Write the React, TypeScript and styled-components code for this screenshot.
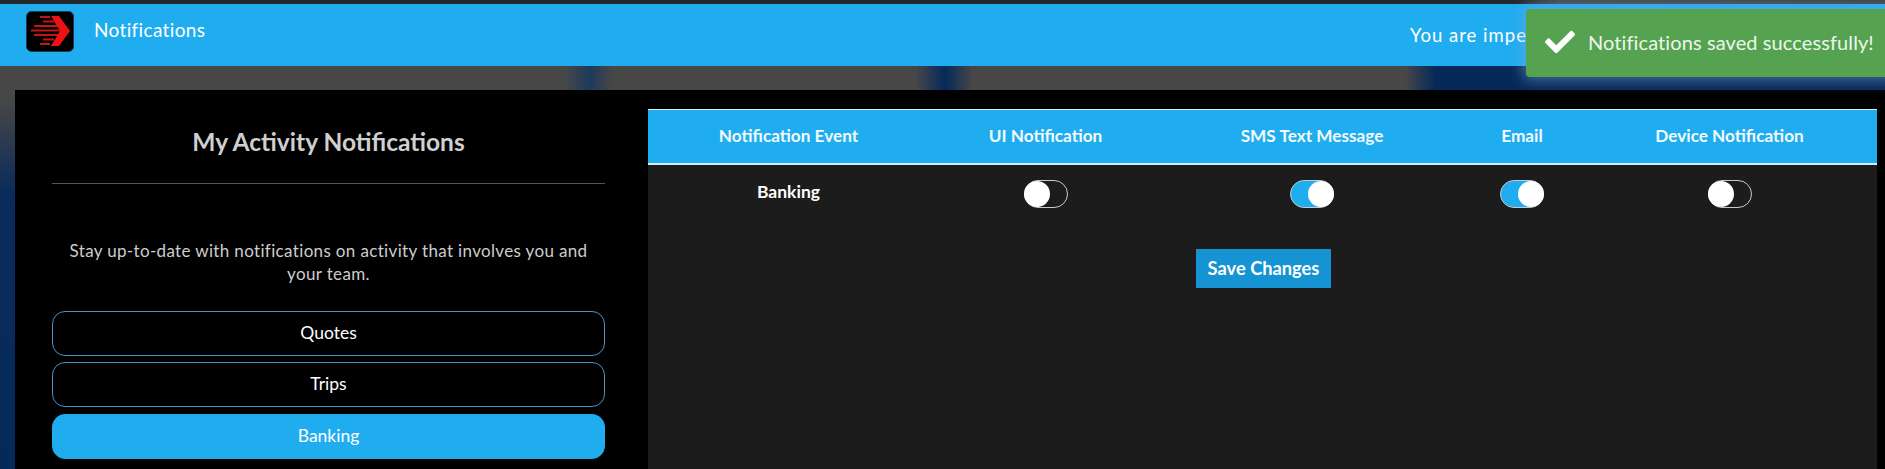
import React from "react";
import styled, { createGlobalStyle } from "styled-components";
import { FaCheck } from "react-icons/fa";

const Global = createGlobalStyle`
  html, body { margin: 0; padding: 0; background: #000; }
  * { box-sizing: border-box; }
  body { font-family: "Lato", "Noto Sans", "Liberation Sans", sans-serif; }
`;

const Page = styled.div`
  position: relative;
  width: 1885px;
  height: 469px;
  overflow: hidden;
  display: flex;
  flex-direction: column;
  background:
    linear-gradient(90deg, transparent 0, transparent 565px, #1d3a5c 590px, transparent 613px, transparent 915px, #062a5a 945px, transparent 973px, transparent 1405px, #06295a 1435px, #06295a 100%),
    linear-gradient(180deg, #474747 0, #474747 100px, #0b2c5a 190px, #052a58 100%);
`;

const TopStrip = styled.div`
  height: 4px;
  background: linear-gradient(90deg, #23292c 0, #23292c 1520px, #45484a 1560px, #3c3f40 100%);
`;

const Header = styled.header`
  height: 62px;
  background: #20adf0;
  display: flex;
  align-items: center;
  padding-left: 26px;
  color: #fff;
`;

const Logo = styled.svg`
  width: 48px;
  height: 41px;
  margin-top: -8px;
  flex: none;
`;

const PageTitle = styled.div`
  margin-left: 20px;
  margin-top: -11px;
  font-size: 19px;
  letter-spacing: 0.35px;
`;

const Impersonation = styled.div`
  margin-left: auto;
  width: 475px;
  margin-top: -1px;
  white-space: nowrap;
  font-size: 18.5px;
  letter-spacing: 1px;
`;

const Main = styled.main`
  flex: 1;
  min-height: 0;
  padding: 24px 0 0 15px;
  display: flex;
`;

const Panel = styled.section`
  flex: 1;
  display: flex;
  background: #000;
`;

const Sidebar = styled.aside`
  width: 633px;
  flex: none;
  padding: 0 43px 0 37px;
  display: flex;
  flex-direction: column;
`;

const SideTitle = styled.h2`
  margin: 0;
  height: 94px;
  padding-top: 10px;
  display: flex;
  align-items: center;
  justify-content: center;
  font-size: 24.5px;
  font-weight: 700;
  color: #cfcfcf;
  border-bottom: 1px solid #555;
`;

const Lead = styled.p`
  margin: 55px 0 0;
  padding: 0 12px;
  font-size: 17px;
  line-height: 23px;
  letter-spacing: 0.35px;
  text-align: center;
  color: #cdcdcd;
`;

const Topics = styled.div`
  margin-top: 26px;
  display: flex;
  flex-direction: column;
  gap: 6px;
`;

const Topic = styled.button<{ $active?: boolean }>`
  height: 45px;
  flex: none;
  margin-top: ${(p) => (p.$active ? "1px" : "0")};
  padding: 0 0 3px;
  border-radius: 13px;
  border: 1px solid ${(p) => (p.$active ? "#20adf0" : "#4b93c9")};
  background: ${(p) => (p.$active ? "#20adf0" : "#000")};
  color: #fff;
  font: inherit;
  font-size: 17.5px;
  text-align: center;
`;

const Content = styled.div`
  flex: 1;
  min-width: 0;
  padding: 19px 8px 0 0;
  display: flex;
`;

const Table = styled.div`
  flex: 1;
  background: #1c1c1c;
  display: flex;
  flex-direction: column;
`;

const columns = "281px 233px 300px 120px 295px";

const HeadRow = styled.div`
  height: 56px;
  display: grid;
  grid-template-columns: ${columns};
  align-items: center;
  background: #20adf0;
  border-top: 1px solid #d5eefa;
  border-bottom: 2px solid #d5eefa;
`;

const HeadCell = styled.div`
  text-align: center;
  color: #f2faff;
  font-size: 17.2px;
  font-weight: 700;
  margin-top: -3px;
`;

const BodyRow = styled.div`
  display: grid;
  grid-template-columns: ${columns};
  align-items: start;
  padding-top: 15px;
`;

const EventName = styled.div`
  text-align: center;
  color: #fff;
  font-size: 17.5px;
  font-weight: 700;
  line-height: 24px;
`;

const SwitchCell = styled.div`
  display: flex;
  justify-content: center;
`;

const Switch = styled.div<{ $on?: boolean }>`
  width: 44px;
  height: 28px;
  border-radius: 14px;
  border: 1px solid #c9c9c9;
  background: ${(p) => (p.$on ? "#20adf0" : "#1c1c1c")};
  display: flex;
  justify-content: ${(p) => (p.$on ? "flex-end" : "flex-start")};
`;

const Knob = styled.span`
  width: 26px;
  height: 26px;
  margin: 0 -1px;
  border-radius: 50%;
  background: #fff;
`;

const Actions = styled.div`
  margin-top: 41px;
  padding-left: 548px;
`;

const SaveButton = styled.button`
  width: 135px;
  height: 39px;
  padding: 0 0 2px;
  border: none;
  background: #1593d2;
  color: #fff;
  font: inherit;
  font-size: 18.3px;
  font-weight: 700;
`;

const Toast = styled.div`
  position: absolute;
  left: 1526px;
  top: 9px;
  width: 400px;
  height: 68px;
  padding: 0 0 2px 19px;
  display: flex;
  align-items: center;
  gap: 13px;
  background: #55a351;
  border-radius: 4px;
  color: #eef6ec;
  font-size: 20px;
  letter-spacing: 0.1px;
  box-shadow: 0 0 14px 3px rgba(120, 170, 215, 0.55);
`;

const ToastIcon = styled(FaCheck)`
  width: 30px;
  height: 30px;
  color: #fff;
  flex: none;
`;

const speedLines = [
  "M14 6H24", "M17 10.5H28", "M8 15H34", "M5 19.5H36", "M8 24H34", "M17 28.5H28", "M14 33H24",
];

const heads = ["Notification Event", "UI Notification", "SMS Text Message", "Email", "Device Notification"];

export default function App() {
  return (
    <Page>
      <Global />
      <TopStrip />
      <Header>
        <Logo viewBox="0 0 48 41" aria-label="logo">
          <rect x="0.5" y="0.5" width="47" height="40" rx="5" fill="#000" stroke="#22384a" />
          <g stroke="#c41414" strokeWidth="2" fill="none">
            {speedLines.map((d) => (
              <path key={d} d={d} />
            ))}
          </g>
          <path d="M25 5H33L44 20L33 35H25L34 20Z" fill="#ee1212" />
        </Logo>
        <PageTitle>Notifications</PageTitle>
        <Impersonation>You are impersonating</Impersonation>
      </Header>
      <Main>
        <Panel>
          <Sidebar>
            <SideTitle>My Activity Notifications</SideTitle>
            <Lead>
              Stay up-to-date with notifications on activity that involves you and your team.
            </Lead>
            <Topics>
              <Topic>Quotes</Topic>
              <Topic>Trips</Topic>
              <Topic $active>Banking</Topic>
            </Topics>
          </Sidebar>
          <Content>
            <Table>
              <HeadRow>
                {heads.map((h) => (
                  <HeadCell key={h}>{h}</HeadCell>
                ))}
              </HeadRow>
              <BodyRow>
                <EventName>Banking</EventName>
                {[false, true, true, false].map((on, i) => (
                  <SwitchCell key={i}>
                    <Switch $on={on}>
                      <Knob />
                    </Switch>
                  </SwitchCell>
                ))}
              </BodyRow>
              <Actions>
                <SaveButton>Save Changes</SaveButton>
              </Actions>
            </Table>
          </Content>
        </Panel>
      </Main>
      <Toast>
        <ToastIcon />
        Notifications saved successfully!
      </Toast>
    </Page>
  );
}
